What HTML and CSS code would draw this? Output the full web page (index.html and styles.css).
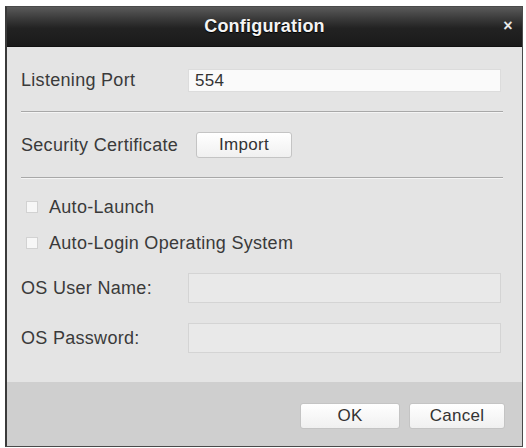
FILE: index.html
```html
<!DOCTYPE html>
<html lang="en">
<head>
  <meta charset="UTF-8" />
  <title>Configuration</title>
  <link rel="stylesheet" href="styles.css">
</head>
<body>
  <div class="dialog">
    <div class="title-bar">
      <span class="title">Configuration</span>
      <span class="close">&#215;</span>
    </div>

    <div class="content">
      <div class="row row-port">
        <label class="label">Listening Port</label>
        <input type="text" class="field" value="554" />
      </div>
      <div class="separator"></div>

      <div class="row row-cert">
        <label class="label">Security Certificate</label>
        <button class="btn btn-import">Import</button>
      </div>
      <div class="separator"></div>

      <label class="check-row first">
        <span class="checkbox"></span>
        <span>Auto-Launch</span>
      </label>
      <label class="check-row">
        <span class="checkbox"></span>
        <span>Auto-Login Operating System</span>
      </label>

      <div class="row row-os">
        <label class="label">OS User Name:</label>
        <input type="text" class="field disabled" disabled />
      </div>
      <div class="row row-os">
        <label class="label">OS Password:</label>
        <input type="password" class="field disabled" disabled />
      </div>
    </div>

    <div class="footer">
      <button class="btn btn-ok">OK</button>
      <button class="btn btn-cancel">Cancel</button>
    </div>
  </div>
</body>
</html>
```

FILE: styles.css
```css
* {
  box-sizing: border-box;
  margin: 0;
  padding: 0;
}

body {
  background: #fff;
  font-family: "Liberation Sans", Arial, sans-serif;
  font-size: 18px;
  letter-spacing: 0.3px;
  color: #3a3a3a;
}

.dialog {
  width: 518px;
  height: 441px;
  margin: 6px 0 0 5px;
  border: 1px solid #4a4a4a;
  border-left: 2px solid #3a3a3a;
  background: #e4e4e4;
  display: flex;
  flex-direction: column;
}

.title-bar {
  height: 40px;
  flex-shrink: 0;
  position: relative;
  display: flex;
  justify-content: center;
  align-items: center;
  background: linear-gradient(#5a5a5a 0%, #3a3a3a 30%, #222 55%, #1a1a1a 100%);
  border-bottom: 1px solid #111;
}

.title {
  color: #f4f4f4;
  font-weight: bold;
  font-size: 18px;
  letter-spacing: 0.2px;
  text-shadow: 0 1px 1px #000;
}

.close {
  position: absolute;
  right: 9px;
  top: 10px;
  color: #e8e8e8;
  font-weight: bold;
  font-size: 16px;
}

.content {
  flex: 1;
  padding: 0 21px 0 14px;
}

.row {
  display: flex;
  align-items: center;
}

.label {
  width: 167px;
  flex-shrink: 0;
}

.row-port {
  margin-top: 22px;
  height: 23px;
}

.row-cert {
  margin-top: 19px;
  height: 26px;
}

.row-cert .label {
  width: 175px;
}

.row-os {
  margin-top: 20px;
  height: 30px;
}

.field {
  flex: 1;
  height: 100%;
  border: 1px solid #dcdcdc;
  background: #fafafa;
  padding: 0 6px;
  font-family: inherit;
  font-size: 17px;
  letter-spacing: 0.3px;
  color: #333;
  outline: none;
}

.field.disabled {
  background: #e9e9e9;
  border-color: #d4d4d4;
}

.separator {
  margin-top: 19px;
  margin-right: -2px;
  height: 2px;
  border-top: 1px solid #a8a8a8;
  border-bottom: 1px solid #f4f4f4;
}

.check-row {
  display: flex;
  align-items: center;
  height: 20px;
  margin-top: 16px;
}

.check-row.first {
  margin-top: 18px;
}

.checkbox {
  width: 12px;
  height: 12px;
  margin: 0 11px 0 5px;
  background: #f7f7f7;
  border: 1px solid #d2d2d2;
}

.btn {
  height: 26px;
  border: 1px solid #c4c4c4;
  border-radius: 3px;
  background: linear-gradient(#ffffff, #f0f0f0);
  font-family: inherit;
  font-size: 17px;
  letter-spacing: 0.3px;
  color: #333;
  cursor: pointer;
}

.btn-import {
  width: 96px;
}

.footer {
  height: 64px;
  flex-shrink: 0;
  background: #cfcfcf;
  display: flex;
  justify-content: flex-end;
  align-items: flex-start;
  gap: 9px;
  padding: 21px 17px 0 0;
}

.btn-ok {
  width: 100px;
}

.btn-cancel {
  width: 96px;
}
```
